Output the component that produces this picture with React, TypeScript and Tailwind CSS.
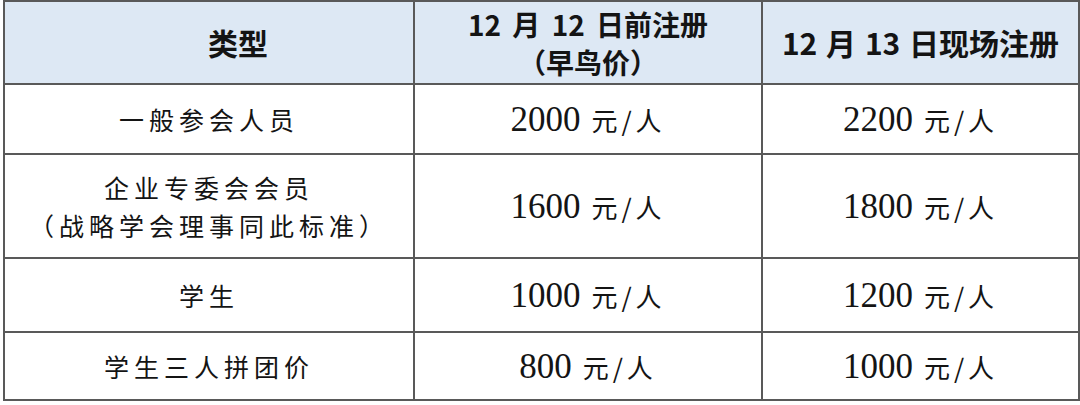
const header = {
  type: "类型",
  early: ["12 月 12 日前注册", "（早鸟价）"],
  onsite: "12 月 13 日现场注册",
};

const rows = [
  { label: ["一般参会人员"], early: "2000", onsite: "2200", h: "h-[70px]" },
  { label: ["企业专委会会员", "（战略学会理事同此标准）"], early: "1600", onsite: "1800", h: "h-[104px]" },
  { label: ["学生"], early: "1000", onsite: "1200", h: "h-[74px]" },
  { label: ["学生三人拼团价"], early: "800", onsite: "1000", h: "h-[68px]" },
];

const Price = ({ amount }: { amount: string }) => (
  <span className="inline-flex items-baseline">
    <span className="text-[35px] leading-none" style={{ fontFamily: '"Liberation Serif", serif' }}>{amount}</span>
    <span className="ml-[11px] text-[26px] leading-none tracking-[4px]">元/人</span>
  </span>
);

const cell = "border-2 border-[#595959] text-center align-middle";

export default function App() {
  return (
    <div className="bg-white w-[1080px] h-[405px] pl-[3px]" style={{ fontFamily: '"Noto Sans CJK SC", sans-serif' }}>
      <table className="table-fixed border-collapse w-[1075px] text-[#141414]">
        <colgroup>
          <col className="w-[410px]" />
          <col className="w-[348px]" />
          <col className="w-[317px]" />
        </colgroup>
        <thead>
          <tr className="h-[83px] bg-[#dde8f4]">
            <th className={`${cell} pl-[58px] text-[30px] font-bold`}>{header.type}</th>
            <th className={`${cell} text-[28px] font-bold leading-[38px] [word-spacing:5px]`}>
              {header.early.map((l) => (
                <div key={l}>{l}</div>
              ))}
            </th>
            <th className={`${cell} text-[30px] font-bold [word-spacing:2px]`}>{header.onsite}</th>
          </tr>
        </thead>
        <tbody>
          {rows.map((r) => (
            <tr key={r.early} className={r.h}>
              <td className={`${cell} text-[25px] tracking-[5px] leading-[38px]`}>
                {r.label.map((l) => (
                  <div key={l}>{l}</div>
                ))}
              </td>
              <td className={cell}>
                <Price amount={r.early} />
              </td>
              <td className={cell}>
                <Price amount={r.onsite} />
              </td>
            </tr>
          ))}
        </tbody>
      </table>
    </div>
  );
}
